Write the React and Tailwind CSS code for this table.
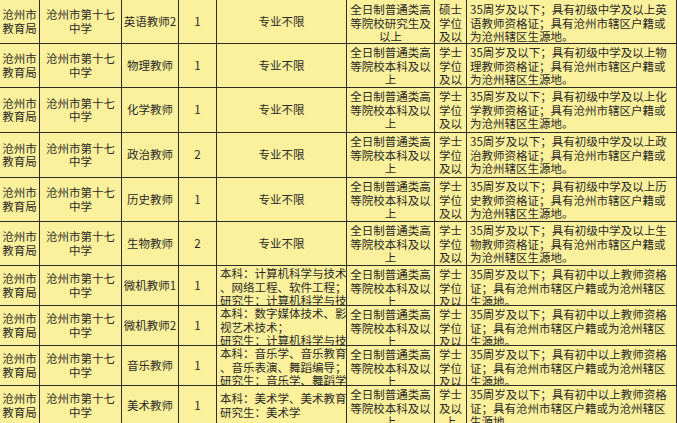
const req1 = (a, b) => [
  `35周岁及以下；具有初级中学及以上${a}`,
  `${b}教师资格证；具有沧州市辖区户籍或`,
  '为沧州辖区生源地。',
];

const req2 = [
  '35周岁及以下；具有初中以上教师资格',
  '证；具有沧州市辖区户籍或为沧州辖区',
  '生源地。',
];

const eduBk = ['全日制普通类高', '等院校本科及以', '上'];
const degBk = ['学士', '学位', '及以', '上'];

const rows = [
  { sub: '英语教师2', n: '1', major: ['专业不限'], edu: ['全日制普通类高', '等院校研究生及', '以上'], deg: ['硕士', '学位', '及以', '上'], req: req1('英', '语'), h: 'h-[44px]' },
  { sub: '物理教师', n: '1', major: ['专业不限'], edu: eduBk, deg: degBk, req: req1('物', '理'), h: 'h-[44px]' },
  { sub: '化学教师', n: '1', major: ['专业不限'], edu: eduBk, deg: degBk, req: req1('化', '学'), h: 'h-[45px]' },
  { sub: '政治教师', n: '2', major: ['专业不限'], edu: eduBk, deg: degBk, req: req1('政', '治'), h: 'h-[45px]' },
  { sub: '历史教师', n: '1', major: ['专业不限'], edu: eduBk, deg: degBk, req: req1('历', '史'), h: 'h-[44px]' },
  { sub: '生物教师', n: '2', major: ['专业不限'], edu: eduBk, deg: degBk, req: req1('生', '物'), h: 'h-[44px]' },
  { sub: '微机教师1', n: '1', major: ['本科：计算机科学与技术', '、网络工程、软件工程；', '研究生：计算机科学与技术'], edu: eduBk, deg: degBk, req: req2, h: 'h-[40px]' },
  { sub: '微机教师2', n: '1', major: ['本科：数字媒体技术、影', '视艺术技术；', '研究生：计算机科学与技术'], edu: eduBk, deg: degBk, req: req2, h: 'h-[40px]' },
  { sub: '音乐教师', n: '1', major: ['本科：音乐学、音乐教育', '、音乐表演、舞蹈编导；', '研究生：音乐学、舞蹈学'], edu: eduBk, deg: degBk, req: req2, h: 'h-[40px]' },
  { sub: '美术教师', n: '1', major: ['本科：美术学、美术教育', '研究生：美术学'], edu: eduBk, deg: ['学士', '及以', '上'], req: req2, h: 'h-[40px]' },
];

// one table cell, lines are broken by hand like the sheet
const Cell = ({ lines, className = '' }) => (
  <div className={`flex flex-col overflow-hidden border-r border-b border-[#2e2e2a] ${className}`}>
    {lines.map((l, i) => (
      <div key={i} className="shrink-0 whitespace-nowrap">{l}</div>
    ))}
  </div>
);

export default function App() {
  return (
    <div className="w-[677px] h-[423px] overflow-hidden bg-[#fbf09c] text-[#2a2a26] text-[11.5px] leading-[13.5px] font-['Noto_Sans_CJK_SC','Noto_Sans',sans-serif]">
      {rows.map((r, i) => {
        const long = r.major.length > 1;
        return (
          <div key={i} className={`grid grid-cols-[40px_82px_57px_38px_130px_88px_32px_1fr] ${r.h}`}>
            <Cell lines={['沧州市', '教育局']} className="justify-center items-center" />
            <Cell lines={['沧州市第十七', '中学']} className="justify-center items-center" />
            <Cell lines={[r.sub]} className="justify-center items-center" />
            <Cell lines={[r.n]} className="justify-center items-center" />
            {long ? (
              <Cell lines={r.major} className={`pl-[3px] ${r.major.length === 2 ? 'justify-center' : 'pt-[1px]'}`} />
            ) : (
              <Cell lines={r.major} className="justify-center items-center" />
            )}
            <Cell lines={r.edu} className={`items-center ${i === 0 ? 'pt-[3px]' : 'pt-[2px]'}`} />
            <Cell lines={r.deg} className={`items-center ${i === 0 ? 'pt-[3px]' : 'pt-[2px]'}`} />
            <Cell lines={r.req} className={`pl-[3px] ${i === 0 ? 'pt-[3px]' : 'pt-[2px]'}`} />
          </div>
        );
      })}
    </div>
  );
}
